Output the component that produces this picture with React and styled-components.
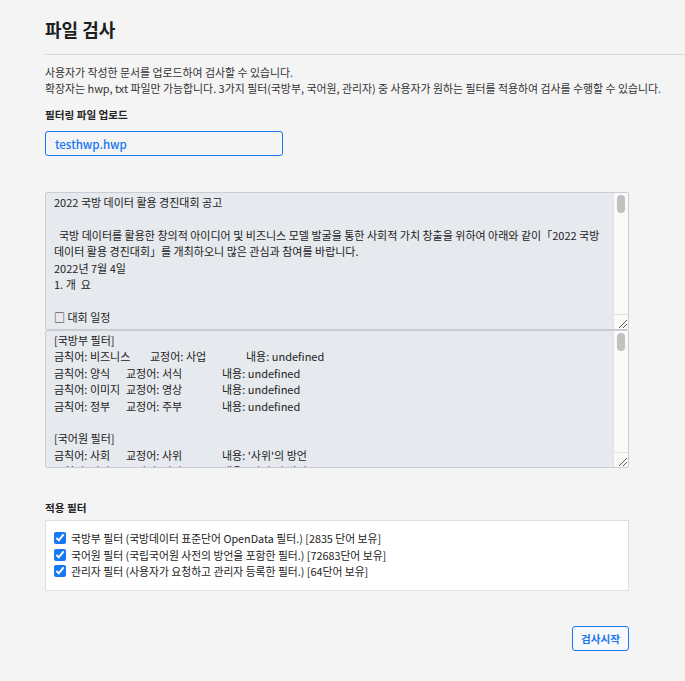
import React from 'react';
import styled, { createGlobalStyle } from 'styled-components';

const GlobalStyle = createGlobalStyle`
  body {
    margin: 0;
    background: #f4f4f4;
    font-family: "Noto Sans CJK KR", "Noto Sans", sans-serif;
    color: #222;
  }
`;

const Page = styled.div`
  padding: 14px 0 30px 45px;
`;

const Header = styled.div`
  border-bottom: 1px solid #dadada;
  padding-bottom: 9px;
`;

const Title = styled.h1`
  margin: 0;
  font-size: 18px;
  font-weight: 700;
  line-height: 31px;
  color: #1e1e1e;
`;

const Content = styled.div`
  width: 584px;
`;

const Desc = styled.p`
  margin: 9px 0 0;
  font-size: 10.9px;
  line-height: 16px;
  color: #333;
  white-space: nowrap;
`;

const Label = styled.div`
  margin-top: ${(p) => p.$top || 11}px;
  font-size: 10.6px;
  font-weight: 700;
  line-height: 16px;
  color: #222;
`;

const FileBox = styled.div`
  margin-top: 8px;
  width: 227px;
  height: 23px;
  border: 1px solid #1877f2;
  border-radius: 3px;
  padding: 0 0 0 9px;
  display: flex;
  align-items: center;
  font-size: 11.5px;
  font-weight: 500;
  color: #1877f2;
`;

const Areas = styled.div`
  margin-top: 36px;
  display: flex;
  flex-direction: column;
`;

const AreaBox = styled.div`
  display: flex;
  box-sizing: border-box;
  height: 138px;
  border: 1px solid #c9cdd2;
  border-radius: 2px;
  background: #e6e9ed;
`;

const AreaText = styled.textarea`
  flex: 1;
  margin: 0;
  padding: 1px 8px;
  border: none;
  background: transparent;
  resize: none;
  overflow: hidden;
  outline: none;
  font-family: "Noto Sans CJK KR", "Noto Sans", sans-serif;
  font-size: 11px;
  line-height: 16.4px;
  color: #222;
  tab-size: 24px;
`;

const Track = styled.div`
  width: 14px;
  background: #fafafa;
  border-left: 1px solid #e2e2e2;
  display: flex;
  flex-direction: column;
  justify-content: space-between;
`;

const Thumb = styled.div`
  margin: 2px 3px 0 3px;
  height: 18px;
  border-radius: 4px;
  background: #c1c1c1;
`;

const Resizer = styled.div`
  height: 14px;
  border-top: 1px solid #e2e2e2;
  display: flex;
  align-items: flex-end;
  justify-content: flex-end;
`;

const Filters = styled.div`
  margin-top: 4px;
  background: #fff;
  border: 1px solid #dde1e6;
  padding: 9px 8px 10px;
  display: flex;
  flex-direction: column;
`;

const FilterRow = styled.label`
  display: flex;
  align-items: center;
  gap: 5px;
  font-size: 10.8px;
  line-height: 16.5px;
  color: #222;
`;

const Check = styled.input`
  margin: 0;
  width: 12px;
  height: 12px;
  accent-color: #1877f2;
`;

const Actions = styled.div`
  margin-top: 35px;
  display: flex;
  justify-content: flex-end;
`;

const Button = styled.button`
  width: 57px;
  height: 25px;
  border: 1px solid #1877f2;
  border-radius: 3px;
  background: #f7f8fa;
  color: #1877f2;
  font-family: "Noto Sans CJK KR", "Noto Sans", sans-serif;
  font-size: 10.6px;
  font-weight: 700;
  padding: 0;
  cursor: pointer;
`;

const notice = [
  '2022 국방 데이터 활용 경진대회 공고',
  '',
  '  국방 데이터를 활용한 창의적 아이디어 및 비즈니스 모델 발굴을 통한 사회적 가치 창출을 위하여 아래와 같이「2022 국방 데이터 활용 경진대회」를 개최하오니 많은 관심과 참여를 바랍니다.',
  '2022년 7월 4일',
  '1. 개  요',
  '',
  '□ 대회 일정',
  '',
  '  ○ 접수기간 : 2022. 7. 4.(월) ~ 8. 5.(금)',
  '  ○ 서류심사 : 2022. 8. 중',
  '  ○ 본선대회 : 2022. 9. 중',
  '□ 참가자격',
  '  ○ 국방 데이터에 관심 있는 국민 누구나',
].join('\n');

const words = [
  '[국방부 필터]',
  '금칙어: 비즈니스\t교정어: 사업\t\t내용: undefined',
  '금칙어: 양식\t교정어: 서식\t\t내용: undefined',
  '금칙어: 이미지\t교정어: 영상\t\t내용: undefined',
  '금칙어: 정부\t교정어: 주부\t\t내용: undefined',
  '',
  '[국어원 필터]',
  "금칙어: 사회\t교정어: 사위\t\t내용: '사위'의 방언",
  "금칙어: 과자\t교정어: 과자\t\t내용: '과자'의 방언",
  "금칙어: 감재\t교정어: 감자\t\t내용: '감자'의 방언",
  "금칙어: 바당\t교정어: 바다\t\t내용: '바다'의 방언",
].join('\n');

const filters = [
  '국방부 필터 (국방데이터 표준단어 OpenData 필터.) [2835 단어 보유]',
  '국어원 필터 (국립국어원 사전의 방언을 포함한 필터.) [72683단어 보유]',
  '관리자 필터 (사용자가 요청하고 관리자 등록한 필터.) [64단어 보유]',
];

const TextPanel = ({ value }) => (
  <AreaBox>
    <AreaText readOnly defaultValue={value} />
    <Track>
      <Thumb />
      <Resizer>
        <svg width="12" height="12" viewBox="0 0 12 12">
          <path d="M3 11 L11 3 M7 11 L11 7" stroke="#555" strokeWidth="1" />
        </svg>
      </Resizer>
    </Track>
  </AreaBox>
);

export default function App() {
  return (
    <>
      <GlobalStyle />
      <Page>
        <Header>
          <Title>파일 검사</Title>
        </Header>
        <Content>
          <Desc>
            사용자가 작성한 문서를 업로드하여 검사할 수 있습니다.
            <br />
            확장자는 hwp, txt 파일만 가능합니다. 3가지 필터(국방부, 국어원, 관리자) 중 사용자가 원하는 필터를 적용하여 검사를 수행할 수 있습니다.
          </Desc>
          <Label>필터링 파일 업로드</Label>
          <FileBox>testhwp.hwp</FileBox>
          <Areas>
            <TextPanel value={notice} />
            <TextPanel value={words} />
          </Areas>
          <Label $top={32}>적용 필터</Label>
          <Filters>
            {filters.map((f) => (
              <FilterRow key={f}>
                <Check type="checkbox" defaultChecked />
                {f}
              </FilterRow>
            ))}
          </Filters>
          <Actions>
            <Button>검사시작</Button>
          </Actions>
        </Content>
      </Page>
    </>
  );
}
